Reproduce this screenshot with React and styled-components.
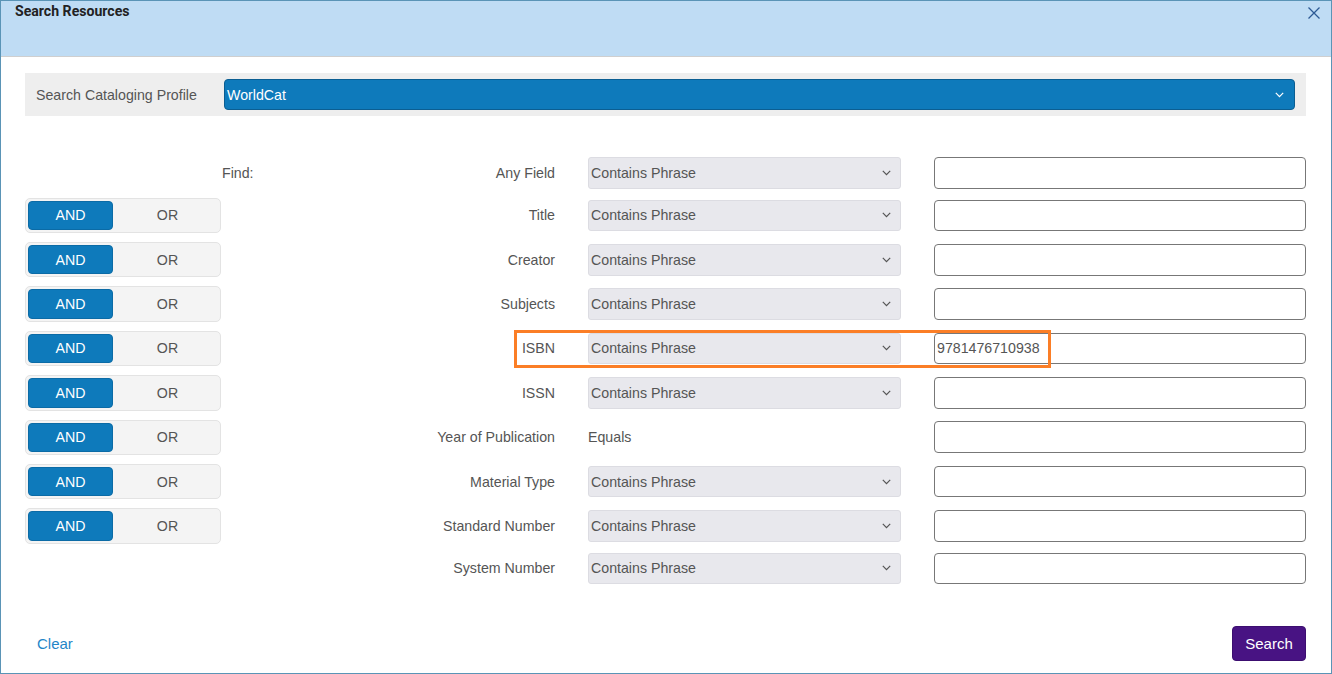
import React from "react";
import styled, { createGlobalStyle } from "styled-components";

const Global = createGlobalStyle`
  html, body { margin: 0; padding: 0; background: #fff; }
  #root { width: 1332px; height: 674px; overflow: hidden; }
  * { box-sizing: border-box; }
`;

const Frame = styled.div`position: relative;`;
const Dialog = styled.div`
  width: 1332px; height: 674px;
  border: 1px solid #5a94b6;
  display: flex; flex-direction: column;
  font-family: "Liberation Sans", Arial, sans-serif;
  font-size: 14.2px; color: #555;
  background: #fff;
`;
const Header = styled.header`
  height: 56px; flex: none;
  background: #bfdcf4;
  border-bottom: 1px solid #cfcfcf;
  padding: 2px 14px;
  display: flex; justify-content: space-between; align-items: flex-start;
`;
const Title = styled.h1`
  margin: 0; font-size: 14.1px; line-height: 16px; font-weight: 700; color: #222;
  font-family: Roboto, "Liberation Sans", sans-serif;
`;
const CloseBtn = styled.button`
  border: 0; background: none; padding: 0; width: 14px; height: 14px;
  margin: 3px -4px 0 0; display: block; color: #2d5a94;
  svg { display: block; }
`;
const Body = styled.div`
  flex: 1; display: flex; flex-direction: column;
  padding: 16px 25px 12px 24px;
`;
const ProfileBar = styled.div`
  height: 43px; background: #eee; flex: none;
  padding: 0 11px;
  display: flex; align-items: center;
`;
const ProfileLabel = styled.span`
  width: 188px; flex: none;
`;
const ProfileSelect = styled.div`
  flex: 1; height: 31px;
  background: #0e7abb;
  border: 1px solid #0b5e92; border-radius: 4px;
  color: #fff; padding: 0 10px 0 2px;
  display: flex; align-items: center; justify-content: space-between;
`;
const Rows = styled.div`
  margin-top: 36.95px; display: flex; flex-direction: column;
`;
const Row = styled.div`
  height: ${p => (p.$toggle ? "44.4px" : "40.2px")};
  display: grid;
  grid-template-columns: 196px 334px 33px 313px 33px 372px;
  align-items: center;
`;
const Toggle = styled.div`
  width: 196px; height: 35.4px;
  background: #f4f4f4; border: 1px solid #e3e3e3; border-radius: 5px;
  padding: 2px; display: flex;
`;
const ToggleOn = styled.div`
  width: 85px; background: #0e7abb; border: 1px solid #0b6ba6; border-radius: 4px;
  color: #fff; display: flex; align-items: center; justify-content: center;
`;
const ToggleOff = styled.div`
  flex: 1; color: #555; display: flex; align-items: center; justify-content: center;
  padding-left: 4px;
`;
const LabelCell = styled.div`
  display: flex; justify-content: space-between; white-space: nowrap;
  padding-left: 1px;
`;
const Select = styled.div`
  height: 31.6px; background: #e8e8ed; border: 1px solid #dcdce2; border-radius: 3px;
  padding: 0 9px 0 2px;
  display: flex; align-items: center; justify-content: space-between;
`;
const Input = styled.div`
  height: 31.6px; border: 1px solid #777; border-radius: 4px; background: #fff;
  padding: 0 2px; display: flex; align-items: center;
`;
const Highlight = styled.div`
  position: absolute; left: 514px; top: 330px; width: 537px; height: 38px;
  border: 3px solid #fb7e26; pointer-events: none;
`;
const Footer = styled.div`
  margin-top: auto; display: flex; justify-content: space-between; align-items: center;
`;
const ClearLink = styled.a`
  color: #1f86c8; font-size: 15px; margin-left: 12px;
`;
const SearchBtn = styled.button`
  width: 74px; height: 35px; background: #481383; color: #fff;
  border: 1px solid #3c0e70; border-radius: 4px;
  font: 15px "Liberation Sans", Arial, sans-serif; padding: 0;
`;

const Chevron = ({ color }) => (
  <svg width="9" height="6" viewBox="0 0 9 6" fill="none" stroke={color} strokeWidth="1.2">
    <path d="M.8.8 4.5 4.6 8.2.8" />
  </svg>
);

const rows = [
  { label: "Any Field", find: true },
  { label: "Title", toggle: true },
  { label: "Creator", toggle: true },
  { label: "Subjects", toggle: true },
  { label: "ISBN", toggle: true, value: "9781476710938" },
  { label: "ISSN", toggle: true },
  { label: "Year of Publication", toggle: true, plain: true },
  { label: "Material Type", toggle: true },
  { label: "Standard Number", toggle: true },
  { label: "System Number" },
];

export default function App() {
  return (
    <Frame>
      <Global />
      <Dialog>
        <Header>
          <Title>Search Resources</Title>
          <CloseBtn aria-label="Close">
            <svg width="14" height="14" viewBox="0 0 14 14" stroke="currentColor" strokeWidth="1.3" fill="none">
              <path d="M1.5 1.5 12.5 12.5M12.5 1.5 1.5 12.5" />
            </svg>
          </CloseBtn>
        </Header>
        <Body>
          <ProfileBar>
            <ProfileLabel>Search Cataloging Profile</ProfileLabel>
            <ProfileSelect>
              WorldCat
              <Chevron color="#fff" />
            </ProfileSelect>
          </ProfileBar>
          <Rows>
            {rows.map(({ label, toggle, find, plain, value }) => (
              <Row key={label} $toggle={toggle}>
                {toggle ? (
                  <Toggle>
                    <ToggleOn>AND</ToggleOn>
                    <ToggleOff>OR</ToggleOff>
                  </Toggle>
                ) : <div />}
                <LabelCell>
                  <span>{find ? "Find:" : ""}</span>
                  <span>{label}</span>
                </LabelCell>
                <div />
                {plain ? <div>Equals</div> : (
                  <Select>Contains Phrase<Chevron color="#555" /></Select>
                )}
                <div />
                <Input>{value}</Input>
              </Row>
            ))}
          </Rows>
          <Footer>
            <ClearLink>Clear</ClearLink>
            <SearchBtn>Search</SearchBtn>
          </Footer>
        </Body>
      </Dialog>
      <Highlight />
    </Frame>
  );
}
